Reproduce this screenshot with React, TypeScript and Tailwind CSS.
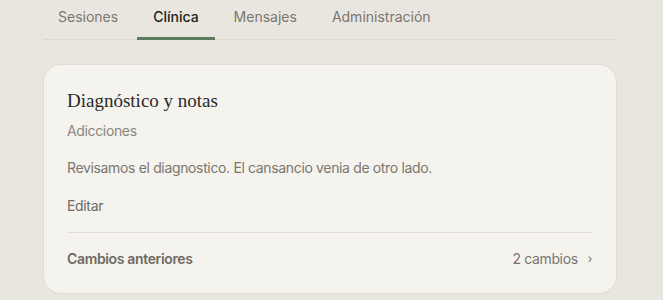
import React from 'react';

const tabs = ['Sesiones', 'Clínica', 'Mensajes', 'Administración'];

export default function App() {
    const active = 'Clínica';
    return (
        <div className="min-h-screen w-full bg-[#e9e6df] font-['Inter',sans-serif]">
            <div className="ml-[43px] mr-[46px]">
                {/* Tabs */}
                <div className="flex gap-[3px] border-b border-[#dcd8d0]">
                    {tabs.map((t, i) => (
                        <div
                            key={t}
                            className={
                                (i === 0 ? 'pl-[15px] pr-[16px] ' : 'px-[16px] ') +
                                (t === active
                                    ? 'pt-[6px] pb-[10px] text-[14px] font-medium text-[#1f1f1c] border-b-[3px] border-[#5c7a5c] -mb-px'
                                    : 'pt-[6px] pb-[10px] text-[14px] text-[#7a766f] border-b-[3px] border-transparent -mb-px')
                            }
                        >
                            {t}
                        </div>
                    ))}
                </div>

                {/* Card */}
                <div className="mt-[24px] rounded-[18px] border border-[#e0dcd4] bg-[#f5f3ee] px-[23px] pt-[24px] pb-[24px] tracking-[-0.35px]">
                    <h2 className="font-['Liberation_Serif',serif] text-[19px] leading-[24px] tracking-normal text-[#2a2926]">
                        Diagnóstico y notas
                    </h2>
                    <div className="mt-[8px] text-[14px] leading-[20px] text-[#8a867f]">Adicciones</div>
                    <p className="mt-[17px] text-[14px] leading-[20px] text-[#7a766f]">
                        Revisamos el diagnostico. El cansancio venia de otro lado.
                    </p>
                    <div className="mt-[18px] text-[14px] leading-[20px] text-[#6e6a63]">Editar</div>
                    <div className="mt-[16px] border-t border-[#e1ddd5]" />
                    <div className="flex items-center justify-between pt-[16px] text-[14px] leading-[20px]">
                        <span className="font-semibold text-[#6e6a63]">Cambios anteriores</span>
                        <span className="flex items-center gap-[10px] text-[#7a766f]">
                            2 cambios
                            <span className="text-[12px] pr-[1px]">›</span>
                        </span>
                    </div>
                </div>
            </div>
        </div>
    );
}
